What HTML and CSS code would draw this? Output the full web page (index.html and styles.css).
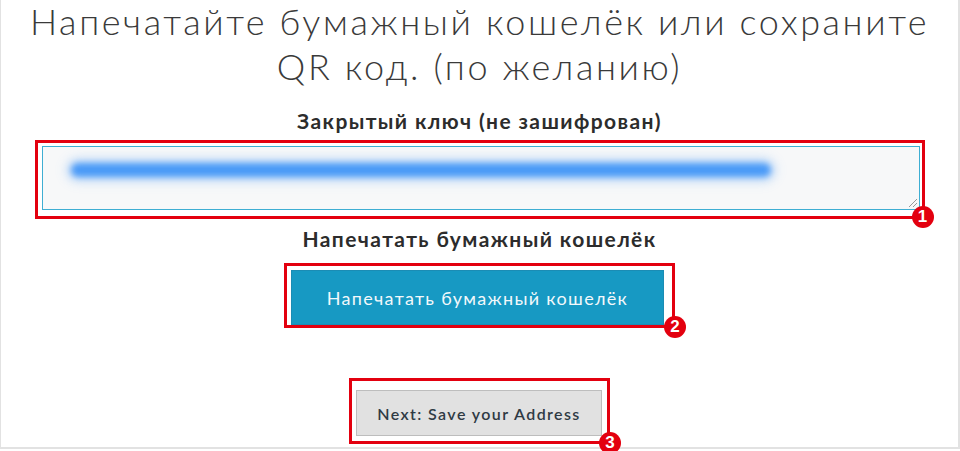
FILE: index.html
```html
<!DOCTYPE html>
<html lang="ru">
<head>
  <meta charset="UTF-8">
  <meta name="viewport" content="width=device-width, initial-scale=1.0">
  <title>Бумажный кошелёк</title>
  <link rel="stylesheet" href="styles.css">
</head>
<body>
  <div class="frame">
    <h1 class="title">Напечатайте бумажный кошелёк или сохраните QR код. (по желанию)</h1>

    <!-- Private key -->
    <h3 class="label">Закрытый ключ (не зашифрован)</h3>
    <div class="mark mark-key">
      <div class="key-box">
        <span class="key-blur"></span>
        <span class="grip"></span>
      </div>
      <span class="badge">1</span>
    </div>

    <!-- Print -->
    <h3 class="label label-print">Напечатать бумажный кошелёк</h3>
    <div class="mark mark-print">
      <button class="btn btn-primary">Напечатать бумажный кошелёк</button>
      <span class="badge">2</span>
    </div>

    <!-- Next step -->
    <div class="mark mark-next">
      <button class="btn btn-default">Next: Save your Address</button>
      <span class="badge">3</span>
    </div>
  </div>
</body>
</html>
```

FILE: styles.css
```css
/* General */
body {
  margin: 0;
  height: 451px;
  overflow: hidden;
  background: #fff;
  font-family: Lato, "Open Sans", Arial, sans-serif;
  color: #333;
}

.frame {
  height: 449px;
  border-left: 1px solid #e2e2e2;
  border-right: 2px solid #e2e2e2;
  border-bottom: 2px solid #e2e2e2;
  box-sizing: border-box;
  display: flex;
  flex-direction: column;
  align-items: center;
}

.title {
  margin: -1px 0 0;
  width: 920px;
  text-align: center;
  font-size: 36px;
  font-weight: 300;
  line-height: 45px;
  letter-spacing: 2.6px;
  color: #3a3a3a;
}

.label {
  margin: 20px 0 0;
  font-size: 21px;
  font-weight: 700;
  line-height: 24px;
  letter-spacing: 1.4px;
  color: #2c2c2c;
}

.label-print {
  margin-top: 8px;
}

/* Red annotation boxes */
.mark {
  position: relative;
  border: 3px solid #e3000f;
  padding: 4px;
}

.badge {
  position: absolute;
  right: -14px;
  bottom: -13px;
  width: 22px;
  height: 22px;
  border-radius: 50%;
  background: #e3000f;
  color: #fff;
  font-family: Arial, sans-serif;
  font-size: 17px;
  font-weight: 700;
  line-height: 22px;
  text-align: center;
}

/* Key textarea */
.mark-key {
  margin-top: 7px;
  width: 878px;
  padding: 3px 2px 6px 4px;
}

.mark-key .badge {
  right: -12px;
  bottom: -12px;
}

.key-box {
  position: relative;
  height: 62px;
  border: 1px solid #3eaed3;
  background: #f7f8f9;
}

.key-blur {
  position: absolute;
  left: 28px;
  top: 16px;
  width: 700px;
  height: 14px;
  border-radius: 7px;
  background: #4a9af7;
  box-shadow: 0 0 8px 4px rgba(74, 154, 247, 0.35);
  filter: blur(3px);
}

.grip {
  position: absolute;
  right: 2px;
  bottom: 2px;
  width: 8px;
  height: 8px;
  background: linear-gradient(135deg, transparent 45%, #999 45%, #999 55%, transparent 55%, transparent 70%, #999 70%, #999 80%, transparent 80%);
}

/* Buttons */
.mark-print {
  margin-top: 12px;
  padding: 4px 8px 0 4px;
}

.mark-next {
  margin-top: 50px;
  padding: 9px 5px 5px 4px;
}

.btn {
  display: block;
  font-family: Lato, Arial, sans-serif;
  cursor: pointer;
}

.btn-primary {
  width: 373px;
  height: 55px;
  border: 1px solid #1b8cb4;
  background: #1799c3;
  color: #f2f8fb;
  font-size: 18px;
  letter-spacing: 1.3px;
}

.btn-default {
  width: 246px;
  height: 46px;
  border: 1px solid #bdbdbd;
  background: #e1e1e1;
  color: #2f3a44;
  font-size: 16px;
  font-weight: 600;
  letter-spacing: 1.4px;
}
```
